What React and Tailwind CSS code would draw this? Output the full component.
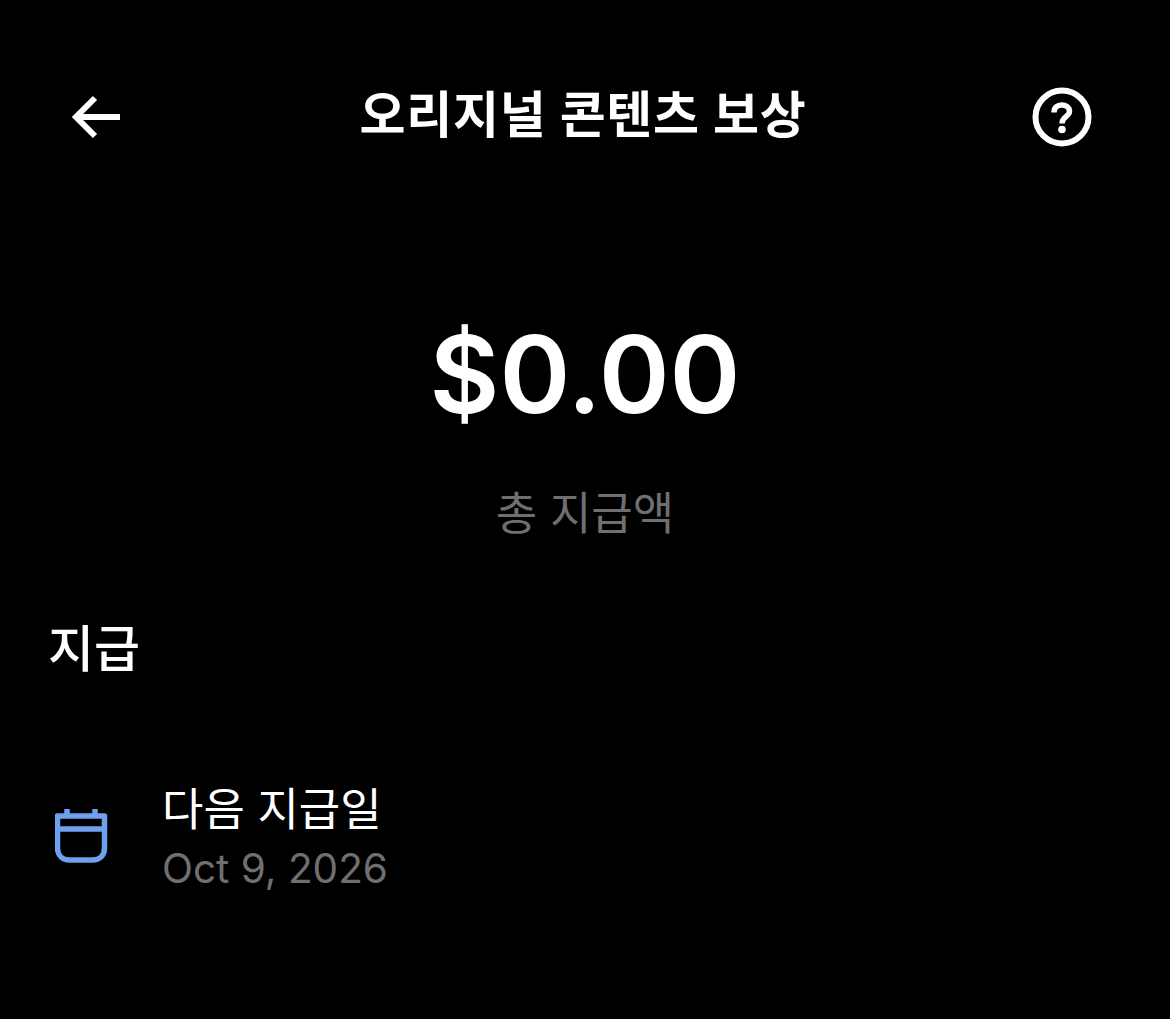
function App() {
  return (
    <div className="h-[1019px] w-full overflow-hidden bg-black text-white font-['Inter','Noto_Sans_CJK_KR',sans-serif]">
      {/* Header */}
      <div className="flex items-center justify-between pt-[87px] pl-[70px] pr-[78px]">
        <svg width="52" height="46" viewBox="0 0 52 46" fill="none" stroke="white" strokeWidth="6" strokeLinecap="butt" strokeLinejoin="miter">
          <path d="M5 23H50" />
          <path d="M25 4L6 23L25 42" />
        </svg>
        <h1 className="mt-[-4px] ml-[12px] text-[50px] leading-[60px] font-semibold tracking-[0.7px]">오리지널 콘텐츠 보상</h1>
        <svg width="60" height="60" viewBox="0 0 60 60" fill="none" stroke="white" strokeWidth="6" strokeLinecap="butt">
          <circle cx="30" cy="30" r="26.5" />
          <path d="M22 25.5C22 20.5 25.5 18 29.5 18C34 18 37.5 20.5 37.5 24.5C37.5 29.5 30 29.5 30 36.5" strokeWidth="5.5" />
          <circle cx="30" cy="42.5" r="3.8" fill="white" stroke="none" />
        </svg>
      </div>

      {/* Total */}
      <div className="mt-[167px] flex flex-col items-center">
        <div className="text-[107.5px] leading-[120px] font-semibold">$0.00</div>
        <div className="mt-[53px] text-[45px] leading-[54px] text-[#6f6f6f]">총 지급액</div>
      </div>

      {/* Payouts */}
      <h2 className="mt-[78px] pl-[48px] text-[50px] leading-[60px] font-medium">지급</h2>
      <div className="mt-[101px] flex items-start gap-[54px] pl-[55px]">
        <svg width="54" height="56" viewBox="0 0 54 56" fill="none" stroke="#6ea0ee" strokeWidth="5.5" strokeLinecap="butt" strokeLinejoin="round" className="mt-[27px]">
          <path d="M2.5 9H49.5V41C49.5 48.5 44.5 53 37.5 53H14.5C7.5 53 2.5 48.5 2.5 41Z" />
          <path d="M2.5 22H49.5" />
          <path d="M12 2V9" />
          <path d="M40 2V9" />
        </svg>
        <div className="mt-[3px] ml-[-1px]">
          <div className="text-[45px] leading-[54px]">다음 지급일</div>
          <div className="mt-[7px] text-[40.5px] leading-[50px] text-[#6f6f6f]">Oct 9, 2026</div>
        </div>
      </div>
    </div>
  );
}

export default App;
